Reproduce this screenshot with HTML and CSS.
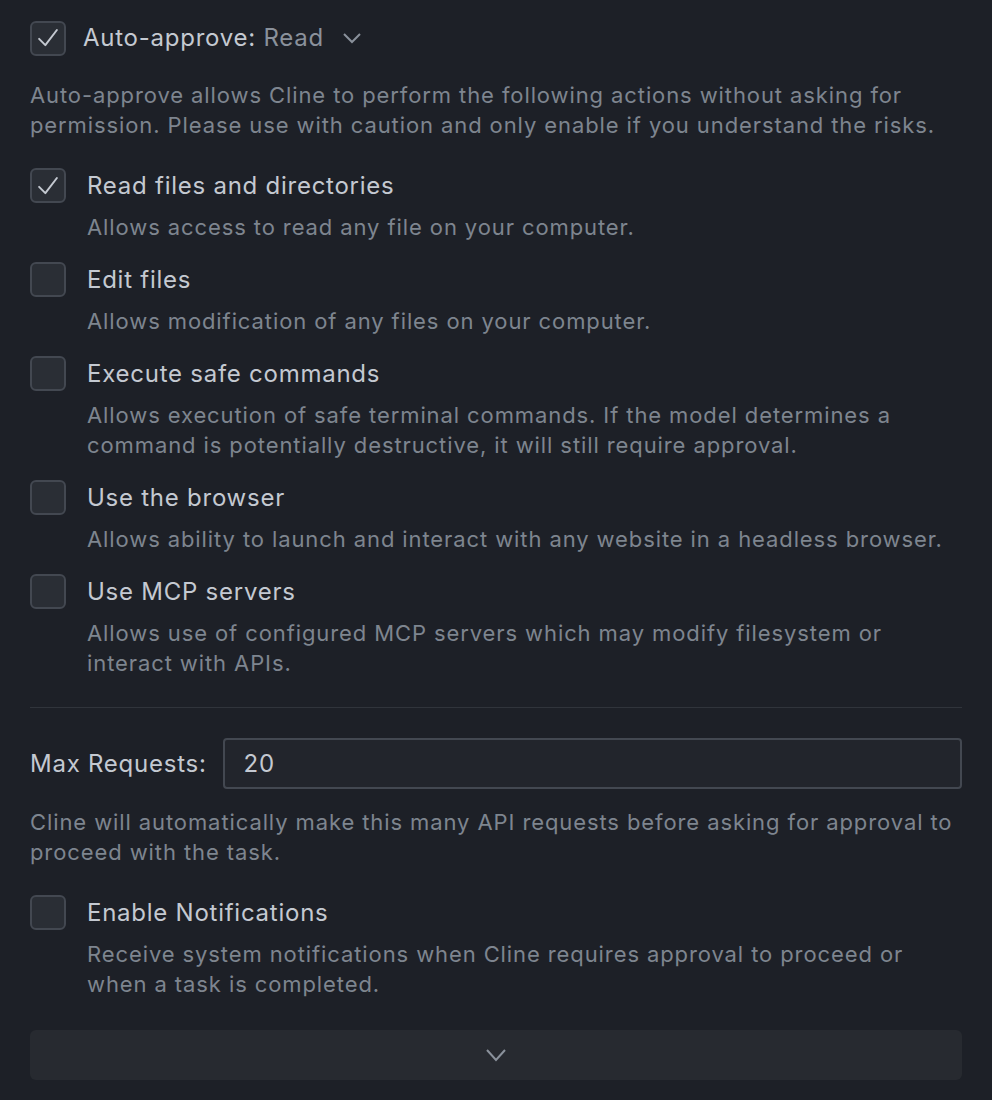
FILE: index.html
```html
<!DOCTYPE html>
<html>
<head>
<meta charset="utf-8">
<link rel="stylesheet" href="styles.css">
</head>
<body>
<div class="panel">
  <div class="header">
    <span class="cb checked"><svg viewBox="0 0 36 36"><path d="M8 19 L15 26 L28 9" /></svg></span>
    <span class="htitle">Auto-approve: <span class="muted">Read</span></span>
    <svg class="chev" viewBox="0 0 20 12"><path d="M2 2 L10 10 L18 2" /></svg>
  </div>
  <p class="intro">Auto-approve allows Cline to perform the following actions without asking for permission. Please use with caution and only enable if you understand the risks.</p>

  <div class="items">
    <div class="item">
      <div class="row"><span class="cb checked"><svg viewBox="0 0 36 36"><path d="M8 19 L15 26 L28 9" /></svg></span><span class="label">Read files and directories</span></div>
      <p class="desc">Allows access to read any file on your computer.</p>
    </div>
    <div class="item">
      <div class="row"><span class="cb"></span><span class="label">Edit files</span></div>
      <p class="desc">Allows modification of any files on your computer.</p>
    </div>
    <div class="item">
      <div class="row"><span class="cb"></span><span class="label">Execute safe commands</span></div>
      <p class="desc">Allows execution of safe terminal commands. If the model determines a command is potentially destructive, it will still require approval.</p>
    </div>
    <div class="item">
      <div class="row"><span class="cb"></span><span class="label">Use the browser</span></div>
      <p class="desc">Allows ability to launch and interact with any website in a headless browser.</p>
    </div>
    <div class="item">
      <div class="row"><span class="cb"></span><span class="label">Use MCP servers</span></div>
      <p class="desc">Allows use of configured MCP servers which may modify filesystem or interact with APIs.</p>
    </div>
  </div>

  <hr class="divider">

  <div class="maxrow">
    <span class="maxlabel">Max Requests:</span>
    <div class="input">20</div>
  </div>
  <p class="intro intro-max">Cline will automatically make this many API requests before asking for approval to proceed with the task.</p>

  <div class="item notif">
    <div class="row"><span class="cb"></span><span class="label">Enable Notifications</span></div>
    <p class="desc">Receive system notifications when Cline requires approval to proceed or when a task is completed.</p>
  </div>

  <div class="collapse">
    <svg class="chev2" viewBox="0 0 22 14"><path d="M2 2 L11 12 L20 2" /></svg>
  </div>
</div>
</body>
</html>
```
FILE: styles.css
```css
html, body {
  margin: 0;
  padding: 0;
  background: #1d2027;
}
body {
  font-family: Inter, "Noto Sans", sans-serif;
  color: #c4c9d1;
  width: 992px;
  height: 1100px;
  overflow: hidden;
  letter-spacing: 0.75px;
}
.panel {
  padding: 20px 30px 0 30px;
}
.header {
  display: flex;
  align-items: center;
  height: 36px;
}
.cb {
  box-sizing: border-box;
  width: 36px;
  height: 35px;
  border: 2px solid #434851;
  border-radius: 6px;
  background: #2a2e35;
  flex: 0 0 auto;
  display: flex;
  align-items: center;
  justify-content: center;
}
.cb svg {
  width: 36px;
  height: 36px;
}
.cb svg path {
  fill: none;
  stroke: #c4c9d1;
  stroke-width: 2.2;
  stroke-linecap: round;
  stroke-linejoin: round;
}
.htitle {
  margin-left: 17px;
  font-size: 24px;
  line-height: 36px;
}
.muted {
  color: #8a919b;
}
.chev {
  width: 20px;
  height: 12px;
  margin-left: 18px;
}
.chev path, .chev2 path {
  fill: none;
  stroke: #8a919b;
  stroke-width: 2;
}
.intro {
  margin: 24px 0 0 0;
  font-size: 22px;
  line-height: 30px;
  color: #7e858f;
  letter-spacing: 0.9px;
}
.intro-max {
  margin-top: 18px;
}
.items {
  margin-top: 28px;
  display: flex;
  flex-direction: column;
  gap: 20px;
}
.row {
  display: flex;
  align-items: center;
  height: 35px;
}
.label {
  margin-left: 21px;
  font-size: 24px;
  line-height: 35px;
}
.desc {
  margin: 9px 0 0 57px;
  font-size: 22px;
  line-height: 30px;
  color: #7e858f;
  letter-spacing: 0.9px;
}
.divider {
  border: 0;
  border-top: 1px solid #30343b;
  margin: 29px 0 30px 0;
}
.maxrow {
  display: flex;
  align-items: center;
  gap: 16px;
}
.maxlabel {
  font-size: 24px;
  line-height: 51px;
  white-space: nowrap;
}
.input {
  box-sizing: border-box;
  flex: 1;
  height: 51px;
  border: 2px solid #434851;
  border-radius: 4px;
  background: #22252c;
  font-size: 24px;
  line-height: 47px;
  padding-left: 19px;
  color: #c4c9d1;
}
.notif {
  margin-top: 28px;
}
.collapse {
  margin-top: 31px;
  height: 50px;
  border-radius: 6px;
  background: #272a30;
  display: flex;
  align-items: center;
  justify-content: center;
}
.chev2 {
  width: 22px;
  height: 14px;
}
```
